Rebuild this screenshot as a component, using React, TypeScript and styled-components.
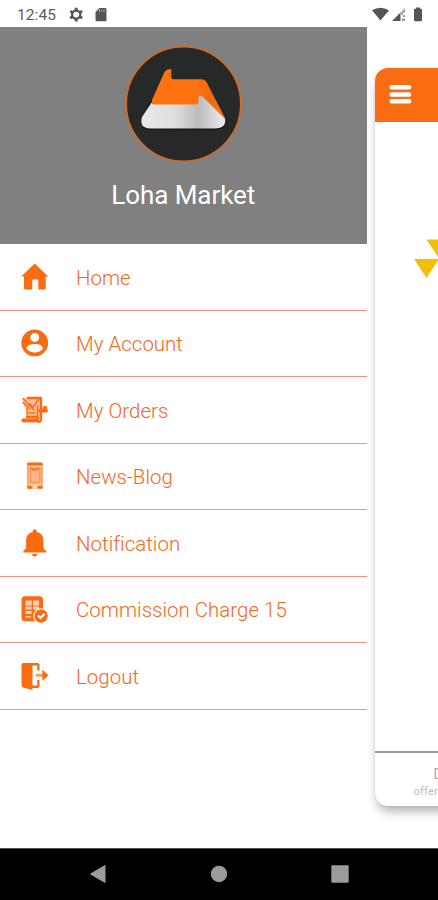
import React from "react";
import styled, { createGlobalStyle } from "styled-components";

const ORANGE = "#fa6c12";

const GlobalStyle = createGlobalStyle`
  * { box-sizing: border-box; }
  body { margin: 0; background: #fff; font-family: Roboto, sans-serif; }
  svg { display: block; flex: none; }
`;

const Screen = styled.div`
  width: 438px;
  height: 900px;
  display: flex;
  flex-direction: column;
  overflow: hidden;
  background: #fff;
`;

const StatusBar = styled.header`
  height: 27px;
  flex: none;
  display: flex;
  align-items: center;
  padding: 2px 14px 0 17px;
  color: #5c5c5c;
`;

const Clock = styled.span`
  width: 51px;
  font-size: 15.5px;
  line-height: 18px;
  letter-spacing: 0.1px;
`;

const StatusGroup = styled.div<{ $end?: boolean }>`
  display: flex;
  align-items: center;
  margin-left: ${(p) => (p.$end ? "auto" : "0")};
`;

const Main = styled.main`
  flex: 1;
  min-height: 0;
  display: flex;
  align-items: flex-start;
`;

const Drawer = styled.aside`
  width: 366.5px;
  flex: none;
`;

const Profile = styled.section`
  height: 217px;
  background: #808080;
  display: flex;
  flex-direction: column;
  align-items: center;
  padding-top: 18px;
`;

const BrandName = styled.h1`
  margin: 16px 0 0;
  color: #fff;
  font-size: 26px;
  line-height: 34px;
  font-weight: 400;
  letter-spacing: -0.05px;
  white-space: nowrap;
`;

const Menu = styled.nav`
  display: flex;
  flex-direction: column;
`;

const MenuItem = styled.a`
  height: 66.5px;
  display: flex;
  align-items: center;
  gap: 26px;
  padding-left: 20px;
  border-bottom: 1px solid #f4907c;
  color: #f8651c;
`;

const Label = styled.span`
  font-size: 20.4px;
  line-height: 26px;
  font-weight: 350;
  letter-spacing: 0.05px;
  white-space: nowrap;
  padding-top: 2px;
`;

const HomeCard = styled.section`
  width: 330px;
  height: 737.5px;
  flex: none;
  margin: 41px 0 0 8.5px;
  display: flex;
  flex-direction: column;
  border-radius: 13px;
  overflow: hidden;
  background: #fff;
  box-shadow: 0 8px 11px -3px rgba(0, 0, 0, 0.32), 0 0 3px rgba(0, 0, 0, 0.12);
`;

const CardBar = styled.div`
  height: 53.5px;
  flex: none;
  padding: 16px 0 0 14px;
  background: ${ORANGE};
`;

const CardBody = styled.div`
  flex: 1;
  padding: 117px 0 0 39px;
`;

const CardFooter = styled.footer`
  height: 54.5px;
  flex: none;
  display: flex;
  flex-direction: column;
  padding-top: 13px;
  border-top: 2px solid #999;
  color: #aaa;
`;

const FooterTitle = styled.span`
  padding-left: 58.5px;
  font-size: 14px;
  line-height: 17px;
`;

const FooterNote = styled.span`
  padding-left: 38.5px;
  font-size: 11px;
  line-height: 18px;
  letter-spacing: 0.25px;
  color: #bcbcbc;
`;

const NavBar = styled.footer`
  height: 52.5px;
  flex: none;
  display: flex;
  align-items: center;
  justify-content: space-between;
  padding: 0 89px 0 88px;
  background: #000;
  border-top: 1px solid #555;
`;

const Logo = () => (
  <svg width="117" height="117" viewBox="0 0 117 117">
    <defs>
      <linearGradient id="silver" x1="0" x2="1">
        <stop offset="0" stopColor="#e9e9e9" />
        <stop offset="0.4" stopColor="#dedede" />
        <stop offset="0.68" stopColor="#bcbcbc" />
        <stop offset="1" stopColor="#eeeeee" />
      </linearGradient>
      <linearGradient id="amber" x1="0" x2="1">
        <stop offset="0.6" stopColor="#ff7210" />
        <stop offset="0.8" stopColor="#ec6a12" />
        <stop offset="1" stopColor="#fb7617" />
      </linearGradient>
    </defs>
    <circle cx="58.5" cy="59" r="57.2" fill="#272828" stroke="#d9691c" strokeWidth="1.500" />
    <path d="M27 54L17 72Q14 84 24 85H92Q102 83 100 75Z" fill="#171717" />
    <path d="M39.500 27Q41.500 24 46.300 24V32Q46.300 34.300 49 34.300H76.500Q80 34.300 82 38L100.500 74L76 60H30Q26 60 27 55Z" fill="url(#amber)" />
    <path d="M27 57L17 72Q14 83 25 83.500H90Q101.500 83 100 74L79 53Q74 48.500 73.500 52V57Q73.500 59.500 71 59.500H29.500Q26.500 59.500 27 57Z" fill="url(#silver)" />
  </svg>
);

const HomeIcon = () => (
  <svg width="30" height="30" viewBox="0 0 30 30" fill={ORANGE}>
    <path d="M14.700 1.500L28.300 14.500H25.700V26Q25.700 27.500 24.200 27.500H18.300V18.500Q18.300 17.500 17.300 17.500H13.300Q12.300 17.500 12.300 18.500V27.500H5.500Q4 27.500 4 26V14.500H1.300Z" />
  </svg>
);

const AccountIcon = () => (
  <svg width="30" height="30" viewBox="0 0 30 30">
    <circle cx="14.700" cy="14.900" r="13.400" fill={ORANGE} />
    <circle cx="14.700" cy="9.400" r="4.400" fill="#fff" />
    <path d="M6.400 20.400Q7.500 16 14.700 16T23 20.400Q19.800 24.500 14.700 24.500T6.400 20.400Z" fill="#fff" />
  </svg>
);

const OrdersIcon = () => (
  <svg width="30" height="30" viewBox="0 0 30 30">
    <path d="M3 3H22V11H27.500V18H22V25.500Q21 28 18 27.500H2V23H7V15L3 9Z" fill="#fdbd96" />
    <g fill="none" stroke={ORANGE} strokeLinecap="round" strokeLinejoin="round">
      <path d="M8 3H21V25Q20 28 17.500 26V22H7" strokeWidth="2.300" />
      <path d="M3 3.500L14 15M3 7.500L10 14M10 9L13 12L19 4" strokeWidth="1.500" />
      <path d="M7 13V20M17.500 11V21M9 18H15" strokeWidth="1.400" />
      <path d="M3 25.500H16" strokeWidth="3.300" />
      <path d="M20 15.500H26M25 12.500V14" strokeWidth="3.500" />
    </g>
  </svg>
);

const NewsIcon = () => (
  <svg width="30" height="30" viewBox="0 0 30 30">
    <rect x="6.800" y="1.500" width="16.200" height="26.500" rx="2" fill="#fdc5a2" />
    <path d="M8.500 3H21.300M8.500 26.200H11M19 26.200H21.300" stroke={ORANGE} strokeWidth="3" strokeLinecap="round" />
    <path d="M8 4V25M22 4V25" stroke="#fb9a60" strokeWidth="1.200" />
    <path d="M10.300 7H19.900V21.700H10.300Z" fill="#fdb58c" stroke="#fb8d4b" strokeWidth="1.300" />
    <path d="M11 7Q12 9 15 9T19 7" fill="none" stroke={ORANGE} strokeWidth="1.500" />
    <circle cx="15" cy="25.500" r="1.700" fill="#ffe3d0" />
  </svg>
);

const BellIcon = () => (
  <svg width="30" height="30" viewBox="0 0 30 30" fill={ORANGE}>
    <path d="M3.300 24.500V23L6.100 20.200V12Q6.300 5.500 12.700 4V2.800Q13 1.200 14.700 1.200T16.700 2.800V4Q23.200 5.500 23.400 12V20.200L26.200 23V24.500Z" />
    <path d="M12 26H17.500Q17 28.500 14.700 28.500T12 26Z" />
  </svg>
);

const ChargeIcon = () => (
  <svg width="30" height="30" viewBox="0 0 30 30">
    <rect x="1.500" y="2.300" width="21.500" height="25" rx="3.500" fill={ORANGE} />
    <path d="M5.500 6.500H11.700V11.500H5.500ZM13 6.500H19V11.500H13ZM5.500 12.500H11.700V15.500H5.500ZM13 12.500H19V15.500H13ZM5.500 17H11.700V20H5.500ZM5.500 22H11V23.500H5.500Z" fill="#ffd2b5" />
    <circle cx="21" cy="22" r="7.800" fill="#fff" />
    <circle cx="21" cy="22" r="6.700" fill={ORANGE} />
    <path d="M18 21.500L20.500 24L24.500 19.800" fill="none" stroke="#fff" strokeWidth="2" />
  </svg>
);

const LogoutIcon = () => (
  <svg width="30" height="30" viewBox="0 0 30 30">
    <path d="M1.500 4Q1.500 2 3.500 2H17.500Q19.500 2 19.500 4V9.500H17.200V4.500H12.500V24.500H17.200V19H19.500V25Q19.500 27 17.500 27H12.500V29L3 26.500Q1.500 26 1.500 24Z" fill={ORANGE} />
    <path d="M16 14.200H24" stroke="#fb9b65" strokeWidth="2.800" />
    <path d="M22.300 8.500L28.500 14.200L22.300 20Z" fill={ORANGE} />
  </svg>
);

const StatusIcons = () => (
  <svg width="40" height="16" viewBox="0 0 40 16">
    <circle cx="8.200" cy="7.600" r="4.100" fill="none" stroke="#555" strokeWidth="2.300" />
    <path d="M8.200 .7V3.200M8.200 12V14.500M2.200 4.100L4.500 5.400M11.900 9.800L14.200 11.100M2.200 11.100L4.500 9.800M11.900 5.400L14.200 4.100" stroke="#555" strokeWidth="2.800" />
    <path d="M31.500 1H37Q38.500 1 38.500 2.500V13Q38.500 14.300 37 14.300H29Q27.500 14.300 27.500 13V5Z" fill="#555" />
    <path d="M31.500 2.500V5M33.800 2.500V5M36.100 2.500V5" stroke="#aaa" strokeWidth="1" />
  </svg>
);

const SignalIcons = () => (
  <svg width="52" height="16" viewBox="0 0 52 16" fill="#555">
    <path d="M0 3.300Q8.500 -1.900 17 3.300L8.500 13.500Z" />
    <path d="M20 14L28 6V14Z" />
    <path d="M28 6L33 1V6H31V8H29V14H28Z" fill="#aaa" />
    <path d="M31 8H33V10H31ZM30 11.500H33V14H30Z" fill="#999" />
    <path d="M44 1.800V.5H48V1.800H49Q50 1.800 50 3V13Q50 14.300 49 14.300H43Q42 14.300 42 13V3Q42 1.800 43 1.800Z" />
  </svg>
);

const BurgerIcon = () => (
  <svg width="24" height="22" viewBox="0 0 24 22">
    <path d="M2.700 3.300H20.200M2.700 10.500H20.200M2.700 17.300H20.200" stroke="#fff" strokeWidth="4.400" strokeLinecap="round" />
  </svg>
);

const Triangles = () => (
  <svg width="50" height="42" viewBox="0 0 50 42" fill="#f3bf08">
    <path d="M12.500 .5H37.500L25 19.500ZM0 20H25L12.500 39Z" />
  </svg>
);

const items = [
  { label: "Home", icon: HomeIcon },
  { label: "My Account", icon: AccountIcon },
  { label: "My Orders", icon: OrdersIcon },
  { label: "News-Blog", icon: NewsIcon },
  { label: "Notification", icon: BellIcon },
  { label: "Commission Charge 15", icon: ChargeIcon },
  { label: "Logout", icon: LogoutIcon },
];

export default function App() {
  return (
    <>
      <GlobalStyle />
      <Screen>
        <StatusBar>
          <Clock>12:45</Clock>
          <StatusGroup><StatusIcons /></StatusGroup>
          <StatusGroup $end><SignalIcons /></StatusGroup>
        </StatusBar>
        <Main>
          <Drawer>
            <Profile>
              <Logo />
              <BrandName>Loha Market</BrandName>
            </Profile>
            <Menu>
              {items.map(({ label, icon: Icon }) => (
                <MenuItem key={label}>
                  <Icon />
                  <Label>{label}</Label>
                </MenuItem>
              ))}
            </Menu>
          </Drawer>
          <HomeCard>
            <CardBar><BurgerIcon /></CardBar>
            <CardBody><Triangles /></CardBody>
            <CardFooter>
              <FooterTitle>D</FooterTitle>
              <FooterNote>offer</FooterNote>
            </CardFooter>
          </HomeCard>
        </Main>
        <NavBar>
          <svg width="18" height="20" viewBox="0 0 18 20"><path d="M17 1.500V18.500L2.500 10Z" fill="#9b9b9b" stroke="#9b9b9b" strokeLinejoin="round" /></svg>
          <svg width="18" height="18" viewBox="0 0 18 18"><circle cx="9" cy="9" r="8.200" fill="#9b9b9b" /></svg>
          <svg width="18" height="18" viewBox="0 0 18 18"><rect x=".3" y=".3" width="17.400" height="17.400" rx="1" fill="#9b9b9b" /></svg>
        </NavBar>
      </Screen>
    </>
  );
}
